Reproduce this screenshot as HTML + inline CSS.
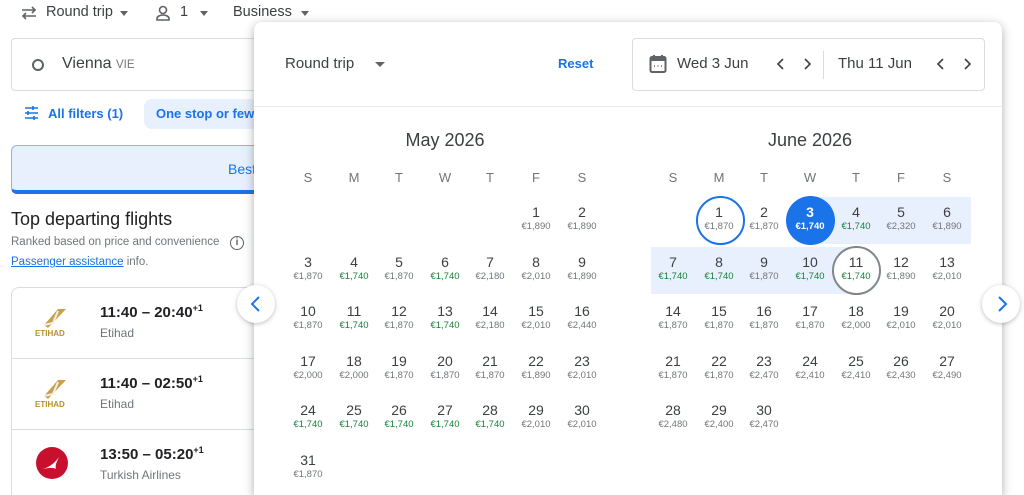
<!DOCTYPE html>
<html><head><meta charset="utf-8"><style>
*{margin:0;padding:0;box-sizing:border-box}
html,body{width:1024px;height:495px;overflow:hidden}
body{background:#fff;font-family:"Liberation Sans",Arial,sans-serif;position:relative;color:#3c4043}
.a{position:absolute}
.pop{position:absolute;left:254px;top:22px;width:748px;height:473px;background:#fff;border-radius:8px 8px 0 0;box-shadow:0 2px 8px rgba(60,64,67,.3),0 4px 14px rgba(60,64,67,.15)}
.c{position:absolute;width:46px;text-align:center}
.c b{display:block;font-weight:normal;font-size:14px;line-height:18px;color:#3c4043}
.c i{display:block;font-style:normal;font-size:9.5px;line-height:12px;color:#70757a}
.c i.g{color:#188038}
.dh{position:absolute;top:170px;width:46px;text-align:center;font-size:13px;color:#70757a}
.mt{position:absolute;top:130px;width:200px;text-align:center;font-size:18px;color:#3c4043}
.nav{position:absolute;width:38px;height:38px;border-radius:50%;background:#fff;box-shadow:0 1px 4px rgba(60,64,67,.35)}
.fl{position:absolute;left:11px;width:250px;border:1px solid #dadce0}
.tm{position:absolute;left:100px;font-size:15px;color:#202124;font-weight:bold}
.tm sup{font-size:9px}
.an{position:absolute;left:100px;font-size:12px;color:#70757a}
</style></head><body>
<svg class="a" style="left:20px;top:5px" width="18" height="16" viewBox="0 0 18 16"><path d="M2 5h13M12 2l3 3-3 3M16 11H3M6 8l-3 3 3 3" stroke="#5f6368" stroke-width="1.6" fill="none"/></svg>
<div class="a" style="left:46px;top:4px;font-size:14.5px;color:#3c4043">Round trip</div>
<div class="a" style="left:120px;top:11px;border:4px solid transparent;border-top:5px solid #5f6368"></div>
<svg class="a" style="left:155px;top:4px" width="16" height="18" viewBox="0 0 16 18"><circle cx="8" cy="6" r="3.5" stroke="#5f6368" stroke-width="1.6" fill="none"/><path d="M2 16v-1.5c0-2 3-3.5 6-3.5s6 1.5 6 3.5V16z" stroke="#5f6368" stroke-width="1.6" fill="none"/></svg>
<div class="a" style="left:180px;top:4px;font-size:14.5px">1</div>
<div class="a" style="left:200px;top:11px;border:4px solid transparent;border-top:5px solid #5f6368"></div>
<div class="a" style="left:233px;top:4px;font-size:14.5px">Business</div>
<div class="a" style="left:301px;top:11px;border:4px solid transparent;border-top:5px solid #5f6368"></div>
<div class="a" style="left:11px;top:38px;width:260px;height:53px;border:1px solid #dadce0;border-radius:4px"></div>
<div class="a" style="left:32px;top:59px;width:12px;height:12px;border:2.5px solid #5f6368;border-radius:50%"></div>
<div class="a" style="left:62px;top:55px;font-size:16px;color:#3c4043">Vienna <span style="font-size:11.5px;color:#70757a">VIE</span></div>
<svg class="a" style="left:24px;top:106px" width="15" height="14" viewBox="0 0 15 14"><path d="M1 2h13M1 7h13M1 12h13M9 0v4M4 5v4M10 10v4" stroke="#1a73e8" stroke-width="1.6"/></svg>
<div class="a" style="left:48px;top:106px;font-size:13px;color:#1a73e8;font-weight:bold">All filters (1)</div>
<div class="a" style="left:144px;top:99px;width:130px;height:30px;background:#e8f0fe;border-radius:8px"></div>
<div class="a" style="left:156px;top:106px;font-size:13px;color:#1a73e8;font-weight:bold">One stop or few</div>
<div class="a" style="left:11px;top:145px;width:260px;height:49px;background:#e8f0fe;border:1px solid #8ab4f8;border-bottom:4px solid #1a73e8;border-radius:6px"></div>
<div class="a" style="left:228px;top:161px;font-size:14px;color:#1a73e8">Best</div>
<div class="a" style="left:11px;top:209px;font-size:18px;color:#202124">Top departing flights</div>
<div class="a" style="left:11px;top:236px;font-size:11.5px;color:#70757a">Ranked based on price and convenience</div>
<div class="a" style="left:230px;top:236px;width:14px;height:14px;border:1.5px solid #5f6368;border-radius:50%;font-size:10px;text-align:center;line-height:11px;color:#5f6368;font-weight:bold">i</div>
<div class="a" style="left:11px;top:256px;font-size:11.5px;color:#70757a"><span style="color:#1a73e8;text-decoration:underline">Passenger assistance</span> info.</div>
<div class="fl" style="top:287px;height:72px;border-radius:8px 8px 0 0"></div>
<div class="fl" style="top:358px;height:72px;border-top:none"></div>
<div class="fl" style="top:430px;height:70px;border-top:none"></div>
<svg class="a" style="left:34px;top:307px" width="36" height="30" viewBox="0 0 36 30"><path d="M14 21L32 2h-8L10 18z" fill="#c8a24a"/><path d="M10 18l9-2 5-12" stroke="#eee" stroke-width="2" fill="none"/><text x="1" y="29" font-size="8" fill="#b8902a" font-family="Liberation Sans" font-weight="bold">ETIHAD</text></svg>
<svg class="a" style="left:34px;top:378px" width="36" height="30" viewBox="0 0 36 30"><path d="M14 21L32 2h-8L10 18z" fill="#c8a24a"/><path d="M10 18l9-2 5-12" stroke="#eee" stroke-width="2" fill="none"/><text x="1" y="29" font-size="8" fill="#b8902a" font-family="Liberation Sans" font-weight="bold">ETIHAD</text></svg>
<div class="a" style="left:36px;top:447px;width:32px;height:32px;border-radius:50%;background:#c8102e"></div>
<svg class="a" style="left:36px;top:447px" width="32" height="32" viewBox="0 0 32 32"><path d="M6 22c6-1 12-5 17-12-3 6-4 9-3 12-3-2-8-1-14 0z" fill="#fff"/></svg>
<div class="tm" style="top:303px">11:40 – 20:40<sup>+1</sup></div><div class="an" style="top:326px">Etihad</div>
<div class="tm" style="top:374px">11:40 – 02:50<sup>+1</sup></div><div class="an" style="top:397px">Etihad</div>
<div class="tm" style="top:445px">13:50 – 05:20<sup>+1</sup></div><div class="an" style="top:468px">Turkish Airlines</div>

<div class="a" style="left:1002px;top:0;width:22px;height:495px;background:#fff"></div>
<div class="pop"></div>
<div class="a" style="left:254px;top:106px;width:748px;height:1px;background:#e8eaed"></div>
<div class="a" style="left:285px;top:55px;font-size:15px;color:#3c4043">Round trip</div>
<div class="a" style="left:375px;top:62px;border:5px solid transparent;border-top:5px solid #5f6368"></div>
<div class="a" style="left:558px;top:56px;font-size:13px;color:#1a73e8;font-weight:bold">Reset</div>
<div class="a" style="left:632px;top:38px;width:353px;height:53px;border:1px solid #dadce0;border-radius:4px"></div>
<svg class="a" style="left:649px;top:54px" width="18" height="20" viewBox="0 0 18 20"><rect x="1.5" y="3" width="15" height="15" rx="1.5" stroke="#5f6368" stroke-width="2" fill="none"/><rect x="1.5" y="3" width="15" height="4" fill="#5f6368"/><path d="M5 1v3M13 1v3" stroke="#5f6368" stroke-width="2"/><path d="M5 12h1M8.5 12h1M12 12h1" stroke="#5f6368" stroke-width="1.5"/></svg>
<div class="a" style="left:677px;top:55px;font-size:15px">Wed 3 Jun</div>
<svg class="a" style="left:774px;top:57px" width="40" height="14" viewBox="0 0 40 14"><path d="M9 2L4 7l5 5M31 2l5 5-5 5" stroke="#3c4043" stroke-width="1.6" fill="none"/></svg>
<div class="a" style="left:823px;top:51px;width:1px;height:28px;background:#dadce0"></div>
<div class="a" style="left:838px;top:55px;font-size:15px">Thu 11 Jun</div>
<svg class="a" style="left:934px;top:57px" width="40" height="14" viewBox="0 0 40 14"><path d="M9 2L4 7l5 5M31 2l5 5-5 5" stroke="#3c4043" stroke-width="1.6" fill="none"/></svg>

<div class="mt" style="left:345px">May 2026</div>
<div class="mt" style="left:710px">June 2026</div>
<div class="dh" style="left:285px">S</div><div class="dh" style="left:331px">M</div><div class="dh" style="left:376px">T</div><div class="dh" style="left:422px">W</div><div class="dh" style="left:467px">T</div><div class="dh" style="left:513px">F</div><div class="dh" style="left:559px">S</div>
<div class="dh" style="left:650px">S</div><div class="dh" style="left:696px">M</div><div class="dh" style="left:741px">T</div><div class="dh" style="left:787px">W</div><div class="dh" style="left:833px">T</div><div class="dh" style="left:878px">F</div><div class="dh" style="left:924px">S</div>

<div class="a" style="left:810px;top:197px;width:161px;height:47px;background:#e8f0fe"></div>
<div class="a" style="left:651px;top:247px;width:205px;height:47px;background:#e8f0fe"></div>
<div class="a" style="left:696px;top:196px;width:49px;height:49px;border:2px solid #1a73e8;border-radius:50%;background:#fff"></div>
<div class="a" style="left:786px;top:196px;width:49px;height:49px;border-radius:50%;background:#1a73e8"></div>
<div class="a" style="left:832px;top:246px;width:49px;height:49px;border:2px solid #80868b;border-radius:50%;background:#fff"></div>

<div class="c" style="left:513px;top:203px"><b>1</b><i>€1,890</i></div>
<div class="c" style="left:559px;top:203px"><b>2</b><i>€1,890</i></div>
<div class="c" style="left:285px;top:253px"><b>3</b><i>€1,870</i></div>
<div class="c" style="left:331px;top:253px"><b>4</b><i class="g">€1,740</i></div>
<div class="c" style="left:376px;top:253px"><b>5</b><i>€1,870</i></div>
<div class="c" style="left:422px;top:253px"><b>6</b><i class="g">€1,740</i></div>
<div class="c" style="left:467px;top:253px"><b>7</b><i>€2,180</i></div>
<div class="c" style="left:513px;top:253px"><b>8</b><i>€2,010</i></div>
<div class="c" style="left:559px;top:253px"><b>9</b><i>€1,890</i></div>
<div class="c" style="left:285px;top:302px"><b>10</b><i>€1,870</i></div>
<div class="c" style="left:331px;top:302px"><b>11</b><i class="g">€1,740</i></div>
<div class="c" style="left:376px;top:302px"><b>12</b><i>€1,870</i></div>
<div class="c" style="left:422px;top:302px"><b>13</b><i class="g">€1,740</i></div>
<div class="c" style="left:467px;top:302px"><b>14</b><i>€2,180</i></div>
<div class="c" style="left:513px;top:302px"><b>15</b><i>€2,010</i></div>
<div class="c" style="left:559px;top:302px"><b>16</b><i>€2,440</i></div>
<div class="c" style="left:285px;top:352px"><b>17</b><i>€2,000</i></div>
<div class="c" style="left:331px;top:352px"><b>18</b><i>€2,000</i></div>
<div class="c" style="left:376px;top:352px"><b>19</b><i>€1,870</i></div>
<div class="c" style="left:422px;top:352px"><b>20</b><i>€1,870</i></div>
<div class="c" style="left:467px;top:352px"><b>21</b><i>€1,870</i></div>
<div class="c" style="left:513px;top:352px"><b>22</b><i>€1,890</i></div>
<div class="c" style="left:559px;top:352px"><b>23</b><i>€2,010</i></div>
<div class="c" style="left:285px;top:401px"><b>24</b><i class="g">€1,740</i></div>
<div class="c" style="left:331px;top:401px"><b>25</b><i class="g">€1,740</i></div>
<div class="c" style="left:376px;top:401px"><b>26</b><i class="g">€1,740</i></div>
<div class="c" style="left:422px;top:401px"><b>27</b><i class="g">€1,740</i></div>
<div class="c" style="left:467px;top:401px"><b>28</b><i class="g">€1,740</i></div>
<div class="c" style="left:513px;top:401px"><b>29</b><i>€2,010</i></div>
<div class="c" style="left:559px;top:401px"><b>30</b><i>€2,010</i></div>
<div class="c" style="left:285px;top:451px"><b>31</b><i>€1,870</i></div>

<div class="c" style="left:696px;top:203px"><b>1</b><i>€1,870</i></div>
<div class="c" style="left:741px;top:203px"><b>2</b><i>€1,870</i></div>
<div class="c" style="left:787px;top:203px"><b style="color:#fff;font-weight:bold">3</b><i style="color:#fff;font-weight:bold">€1,740</i></div>
<div class="c" style="left:833px;top:203px"><b>4</b><i class="g">€1,740</i></div>
<div class="c" style="left:878px;top:203px"><b>5</b><i>€2,320</i></div>
<div class="c" style="left:924px;top:203px"><b>6</b><i>€1,890</i></div>
<div class="c" style="left:650px;top:253px"><b>7</b><i class="g">€1,740</i></div>
<div class="c" style="left:696px;top:253px"><b>8</b><i class="g">€1,740</i></div>
<div class="c" style="left:741px;top:253px"><b>9</b><i>€1,870</i></div>
<div class="c" style="left:787px;top:253px"><b>10</b><i class="g">€1,740</i></div>
<div class="c" style="left:833px;top:253px"><b>11</b><i class="g">€1,740</i></div>
<div class="c" style="left:878px;top:253px"><b>12</b><i>€1,890</i></div>
<div class="c" style="left:924px;top:253px"><b>13</b><i>€2,010</i></div>
<div class="c" style="left:650px;top:302px"><b>14</b><i>€1,870</i></div>
<div class="c" style="left:696px;top:302px"><b>15</b><i>€1,870</i></div>
<div class="c" style="left:741px;top:302px"><b>16</b><i>€1,870</i></div>
<div class="c" style="left:787px;top:302px"><b>17</b><i>€1,870</i></div>
<div class="c" style="left:833px;top:302px"><b>18</b><i>€2,000</i></div>
<div class="c" style="left:878px;top:302px"><b>19</b><i>€2,010</i></div>
<div class="c" style="left:924px;top:302px"><b>20</b><i>€2,010</i></div>
<div class="c" style="left:650px;top:352px"><b>21</b><i>€1,870</i></div>
<div class="c" style="left:696px;top:352px"><b>22</b><i>€1,870</i></div>
<div class="c" style="left:741px;top:352px"><b>23</b><i>€2,470</i></div>
<div class="c" style="left:787px;top:352px"><b>24</b><i>€2,410</i></div>
<div class="c" style="left:833px;top:352px"><b>25</b><i>€2,410</i></div>
<div class="c" style="left:878px;top:352px"><b>26</b><i>€2,430</i></div>
<div class="c" style="left:924px;top:352px"><b>27</b><i>€2,490</i></div>
<div class="c" style="left:650px;top:401px"><b>28</b><i>€2,480</i></div>
<div class="c" style="left:696px;top:401px"><b>29</b><i>€2,400</i></div>
<div class="c" style="left:741px;top:401px"><b>30</b><i>€2,470</i></div>

<div class="nav" style="left:237px;top:285px"></div>
<svg class="a" style="left:248px;top:295px" width="16" height="18" viewBox="0 0 16 18"><path d="M11 2L4 9l7 7" stroke="#1a73e8" stroke-width="2" fill="none"/></svg>
<div class="nav" style="left:982px;top:285px"></div>
<svg class="a" style="left:994px;top:295px" width="16" height="18" viewBox="0 0 16 18"><path d="M5 2l7 7-7 7" stroke="#1a73e8" stroke-width="2" fill="none"/></svg>
</body></html>
